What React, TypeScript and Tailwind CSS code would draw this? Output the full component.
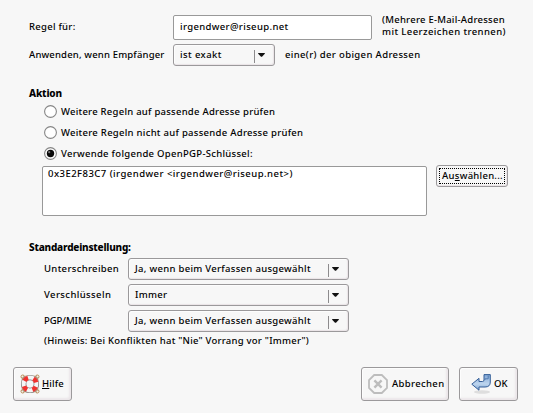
import type { ReactNode } from "react";

function Select({ children, className }: { children: ReactNode; className: string }) {
  return (
    <button
      type="button"
      className={`flex h-[22px] shrink-0 items-center rounded-[3px] border border-[#9b999b] bg-[#f7f7f7] pl-[6px] text-left shadow-[inset_-1px_-1px_1px_#e9e3e6,inset_1px_1px_0_#fdfdfd] ${className}`}
    >
      <span className="flex-1">{children}</span>
      <span className="mt-[2px] h-[13px] w-px bg-[#8d8b8d]" />
      <svg className="mr-[9px] ml-[3px]" width="7" height="4" viewBox="0 0 7 4">
        <path d="M.2 0H6.8V.8L4 3.8H3L.2 .8Z" fill="#111" />
      </svg>
    </button>
  );
}

function Radio({ checked = false, children, textClass }: { checked?: boolean; children: ReactNode; textClass: string }) {
  return (
    <div className="flex h-[21px] items-center gap-[4px]">
      <svg width="13" height="13" viewBox="0 0 13 13">
        <circle cx="6.5" cy="6.5" r="5.9" fill="#fff" stroke="#858585" strokeWidth="1.1" />
        {checked && <circle cx="6.5" cy="6.5" r="3.7" fill="#080808" />}
        {checked && <circle cx="5.2" cy="5.2" r="1.1" fill="#777" />}
      </svg>
      <span className={textClass}>{children}</span>
    </div>
  );
}

function DialogButton({ className, children }: { className: string; children: ReactNode }) {
  return (
    <button
      type="button"
      className={`flex h-[34px] shrink-0 items-center rounded-[3px] border border-[#9b999b] bg-[#f7f7f7] shadow-[inset_-2px_-2px_2px_#ebe6e9,inset_1px_1px_0_#fdfdfd] ${className}`}
    >
      {children}
    </button>
  );
}

function LifebuoyIcon() {
  return (
    <svg width="20" height="20" viewBox="0 0 20 20" fill="none">
      <rect x="2" y="2" width="16" height="16" rx="3.5" stroke="#c9b79c" strokeWidth="1" />
      <circle cx="2.7" cy="2.7" r="1.7" stroke="#b68b55" />
      <circle cx="17.3" cy="2.7" r="1.7" stroke="#b68b55" />
      <circle cx="2.7" cy="17.3" r="1.7" stroke="#b68b55" />
      <circle cx="17.3" cy="17.3" r="1.7" stroke="#b68b55" />
      <circle cx="10" cy="10" r="6.4" stroke="#777" strokeWidth="5.4" />
      <circle cx="10" cy="10" r="6.4" stroke="#f5f5f5" strokeWidth="4" />
      <circle cx="10" cy="10" r="6.4" stroke="#f0322e" strokeWidth="4.6" strokeDasharray="4.4 5.653" strokeDashoffset="-2.83" />
    </svg>
  );
}

function CancelIcon() {
  return (
    <svg width="20" height="20" viewBox="0 0 20 20" fill="none" stroke="#bdbdbd">
      <path d="M6.2 1H13.8L19 6.2V13.8L13.8 19H6.2L1 13.8V6.2Z" strokeWidth="1.8" />
      <path d="M6.4 6.4L13.6 13.6M13.6 6.4L6.4 13.6" strokeWidth="2.4" />
    </svg>
  );
}

function ReturnIcon() {
  return (
    <svg width="20" height="20" viewBox="0 0 20 20">
      <defs>
        <linearGradient id="arrow" x1="0" y1="0" x2="0" y2="1">
          <stop offset="0" stopColor="#7fa5d5" />
          <stop offset="0.6" stopColor="#bdd5ee" />
          <stop offset="1" stopColor="#7ba3d2" />
        </linearGradient>
      </defs>
      <ellipse cx="11" cy="18" rx="8" ry="1.7" fill="#dedede" />
      <path
        d="M.8 10.2L8 4.3V7.5H11.5Q13 7.5 13 6V.6H19.3V8Q19.3 13 14 13H8V16.2Z"
        fill="url(#arrow)"
        stroke="#355f98"
      />
      <path d="M13.9 6V4.8H17.2V1.5" fill="none" stroke="#416ca5" strokeWidth="0.8" />
    </svg>
  );
}

export default function App() {
  return (
    <main className="h-[413px] w-[533px] overflow-hidden bg-[#f7f7f7] pt-[15px] font-['Noto_Sans',sans-serif] text-[9.5px] leading-[12px] font-medium tracking-[0.3px] whitespace-nowrap text-black">
      <div className="flex h-[25px] items-start pl-[29px]">
        <span className="w-[144px] pt-[6px] tracking-[0.27px]">Regel für:</span>
        <input
          readOnly
          value="irgendwer@riseup.net"
          className="h-[25px] w-[199px] rounded-[2px] border border-[#999] bg-white px-[6px] pb-[2px] tracking-[0.35px] outline-none"
        />
        <span className="-mt-px ml-[10px]">
          <span className="block tracking-[0.25px]">(Mehrere E-Mail-Adressen</span>
          <span className="block tracking-[0.42px]">mit Leerzeichen trennen)</span>
        </span>
      </div>
      <div className="mt-[4px] flex h-[22px] items-center pl-[29px]">
        <span className="w-[144px] tracking-[0.17px]">Anwenden, wenn Empfänger</span>
        <Select className="w-[102px] tracking-[0.41px]">ist exakt</Select>
        <span className="ml-[10px] tracking-[0.36px]">eine(r) der obigen Adressen</span>
      </div>

      <h2 className="mt-[20px] h-[15px] pl-[29px] text-[10px] leading-[15px] font-extrabold tracking-[-0.18px]">Aktion</h2>
      <div className="pl-[44px]">
        <Radio textClass="tracking-[0.25px]">Weitere Regeln auf passende Adresse prüfen</Radio>
        <Radio textClass="tracking-[0.28px]">Weitere Regeln nicht auf passende Adresse prüfen</Radio>
        <Radio checked textClass="tracking-[0.29px]">Verwende folgende OpenPGP-Schlüssel:</Radio>
      </div>
      <div className="mt-[1px] flex items-start pl-[42px]">
        <div className="mt-px h-[50px] w-[385px] rounded-[2px] border border-[#999] bg-white pt-[1px] pl-[5px] tracking-[0.46px]">
          0x3E2F83C7 (irgendwer &lt;irgendwer@riseup.net&gt;)
        </div>
        <button type="button" className="ml-[9px] h-[22px] w-[72px] rounded-[3px] border border-[#9b999b] bg-[#f7f7f7] p-[2px] tracking-[0.27px] shadow-[inset_-1px_-1px_1px_#e9e3e6]">
          <span className="flex h-[16px] items-center justify-center border border-dotted border-black pl-px">
            <span>Au<u>s</u>wählen...</span>
          </span>
        </button>
      </div>

      <h2 className="mt-[24px] h-[18px] pl-[29px] text-[10px] leading-[15px] font-extrabold tracking-[-0.21px]">Standardeinstellung:</h2>
      <div className="grid grid-cols-[84px_221px] items-center gap-y-[4px] pl-[44px]">
        <span className="tracking-[0.33px]">Unterschreiben</span>
        <Select className="w-[221px] tracking-[0.3px]">Ja, wenn beim Verfassen ausgewählt</Select>
        <span className="tracking-[0.4px]">Verschlüsseln</span>
        <Select className="w-[221px] tracking-[0.3px]">Immer</Select>
        <span className="tracking-[-0.06px]">PGP/MIME</span>
        <Select className="w-[221px] tracking-[0.3px]">Ja, wenn beim Verfassen ausgewählt</Select>
      </div>
      <p className="mt-[3px] pl-[44px] tracking-[0.24px]">(Hinweis: Bei Konflikten hat "Nie" Vorrang vor "Immer")</p>

      <footer className="mt-[20px] flex pl-[13px]">
        <DialogButton className="w-[59px] gap-[2px] pl-[6px] tracking-[0.18px]">
          <LifebuoyIcon />
          <span><u>H</u>ilfe</span>
        </DialogButton>
        <DialogButton className="ml-[289px] w-[88px] gap-[4px] pl-[6px] tracking-[0.35px]">
          <CancelIcon />
          <span>Abbrechen</span>
        </DialogButton>
        <DialogButton className="ml-[10px] w-[59px] gap-[3px] pl-[11px] tracking-[0.1px]">
          <ReturnIcon />
          <span>OK</span>
        </DialogButton>
      </footer>
    </main>
  );
}
